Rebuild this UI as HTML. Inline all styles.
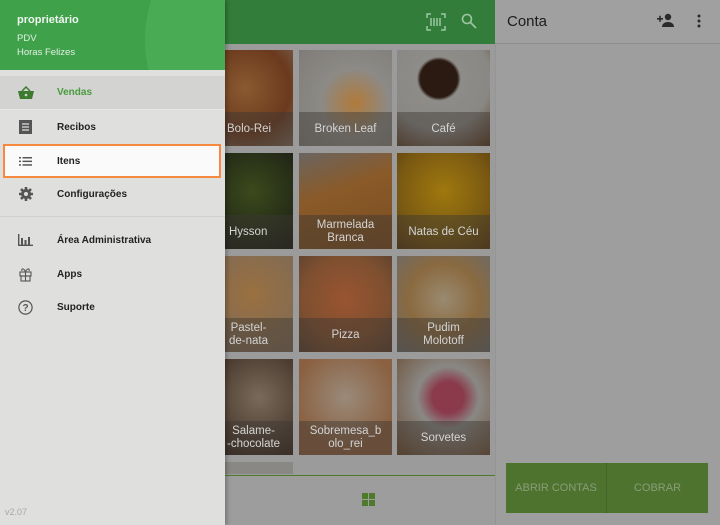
<!DOCTYPE html>
<html><head><meta charset="utf-8"><style>
*{margin:0;padding:0;box-sizing:border-box}
body{width:720px;height:525px;overflow:hidden;position:relative;font-family:"Liberation Sans",sans-serif;background:#9b9b9b}
.abs{position:absolute}
.tile{position:absolute;width:93px;height:96px;overflow:hidden}
.tile .lb{position:absolute;left:0;right:0;bottom:0;height:34px;background:rgba(60,55,50,.45);color:#d4d4d4;font-size:11.5px;text-align:center;display:flex;align-items:center;justify-content:center;line-height:13px}
.mi{position:absolute;left:0;width:225px;height:34px;display:flex;align-items:center;font-size:10px;color:#222;font-weight:bold}
.mi .ic{width:57px;display:flex;justify-content:center;padding-right:6px}
</style></head><body>
<!-- main header -->
<div class="abs" style="left:225px;top:0;width:270px;height:44px;background:#327d3a"></div>
<svg class="abs" style="left:426px;top:13px" width="20" height="18" viewBox="0 0 20 18" fill="none" stroke="#9fc7a3" stroke-width="1.5"><path d="M1 5V1h4M15 1h4v4M19 13v4h-4M5 17H1v-4"/><path d="M5 5v8M8 5v8M11 5v8M14 5v8"/></svg>
<svg class="abs" style="left:461px;top:13px" width="16" height="16" viewBox="0 0 16 16" fill="none" stroke="#9fc7a3" stroke-width="1.6"><circle cx="6" cy="6" r="4.5"/><path d="M9.5 9.5L15 15"/></svg>
<!-- tiles -->
<div class="tile" style="left:225px;top:50px;width:68px;background:radial-gradient(circle at 30% 40%,#8a5a30,#6b3a1e 60%,#7a6a5a)"><div class="lb" style="justify-content:flex-start;padding-left:2px">Bolo-Rei</div></div>
<div class="tile" style="left:299px;top:50px;background:radial-gradient(circle at 60% 55%,#b07a3a,#8c8a86 45%,#7f7c78)"><div class="lb">Broken Leaf</div></div>
<div class="tile" style="left:397px;top:50px;background:radial-gradient(circle at 45% 30%,#2a1a12 22%,#8e8c88 26%,#8a8884 60%,#5a3a22)"><div class="lb">Café</div></div>
<div class="tile" style="left:225px;top:153px;width:68px;background:radial-gradient(circle at 40% 40%,#3a4a1c,#1a1a14)"><div class="lb" style="justify-content:flex-start;padding-left:4px">Hysson</div></div>
<div class="tile" style="left:299px;top:153px;background:linear-gradient(160deg,#6b6560,#8a5a28 40%,#7a4c22)"><div class="lb">Marmelada<br>Branca</div></div>
<div class="tile" style="left:397px;top:153px;background:radial-gradient(circle at 50% 40%,#a0780e,#7a5a12 60%,#5a3a10)"><div class="lb">Natas de Céu</div></div>
<div class="tile" style="left:225px;top:256px;width:68px;background:radial-gradient(circle at 40% 40%,#9a7040,#7a6a5a)"><div class="lb" style="justify-content:flex-start;padding-left:4px">Pastel-<br>de-nata</div></div>
<div class="tile" style="left:299px;top:256px;background:radial-gradient(circle at 50% 45%,#9a5430,#7e5030 60%,#5a4030)"><div class="lb">Pizza</div></div>
<div class="tile" style="left:397px;top:256px;background:radial-gradient(circle at 50% 45%,#9a8a70,#8a6a40 50%,#6a6a6a)"><div class="lb">Pudim<br>Molotoff</div></div>
<div class="tile" style="left:225px;top:359px;width:68px;background:radial-gradient(circle at 50% 40%,#7a6a5a,#3a2a20)"><div class="lb" style="justify-content:flex-start;padding-left:2px">Salame-<br>-chocolate</div></div>
<div class="tile" style="left:299px;top:359px;background:radial-gradient(circle at 50% 40%,#9a8a7a,#8a6040 70%)"><div class="lb">Sobremesa_b<br>olo_rei</div></div>
<div class="tile" style="left:397px;top:359px;background:radial-gradient(circle at 55% 40%,#8a3a4a 20%,#8a8884 40%,#6a4a30)"><div class="lb">Sorvetes</div></div>
<div class="abs" style="left:225px;top:462px;width:68px;height:12px;background:#8a8884"></div>
<!-- bottom bar -->
<div class="abs" style="left:225px;top:475px;width:270px;height:50px;background:#9d9d9d;border-top:1.5px solid #4f7a2c"></div>
<div class="abs" style="left:362px;top:493px;width:13px;height:13px;display:grid;grid-template-columns:6px 6px;gap:1px"><i style="background:#4f7a2c"></i><i style="background:#4f7a2c"></i><i style="background:#4f7a2c"></i><i style="background:#4f7a2c"></i></div>
<!-- right panel -->
<div class="abs" style="left:495px;top:0;width:225px;height:525px;background:#9e9e9e;border-left:1px solid #959595"></div>
<div class="abs" style="left:495px;top:0;width:225px;height:44px;background:#a0a0a0;border-bottom:1px solid #8e8e8e"></div>
<div class="abs" style="left:507px;top:13px;font-size:15px;color:#1c1c1c">Conta</div>
<svg class="abs" style="left:657px;top:13px" width="18" height="14" viewBox="0 0 18 14" fill="#2a2a2a"><circle cx="11" cy="4" r="3.2"/><path d="M5 14c0-3.5 3-5 6-5s6 1.5 6 5z"/><path d="M0 5h6v1.6H0zM2.2 2.8h1.6v6H2.2z"/></svg>
<svg class="abs" style="left:697px;top:14px" width="4" height="14" fill="#2a2a2a"><circle cx="2" cy="2" r="1.5"/><circle cx="2" cy="7" r="1.5"/><circle cx="2" cy="12" r="1.5"/></svg>
<div class="abs" style="left:506px;top:463px;width:202px;height:50px;background:#4d732e;display:flex;color:#8a9d7a;font-size:11px;align-items:center">
<div style="width:101px;text-align:center;border-right:1px dotted #3b5a22;line-height:50px">ABRIR CONTAS</div><div style="width:101px;text-align:center">COBRAR</div></div>
<!-- drawer -->
<div class="abs" style="left:0;top:0;width:225px;height:525px;background:#dfe0dd;box-shadow:2px 0 4px rgba(0,0,0,.25)"></div>
<div class="abs" style="left:0;top:0;width:225px;height:70px;background:#40a14b;overflow:hidden">
<div class="abs" style="left:145px;top:-90px;width:260px;height:260px;border-radius:50%;background:#4aab55"></div>
<div class="abs" style="left:17px;top:14px;font-size:11px;font-weight:bold;color:#eef5ee">proprietário</div>
<div class="abs" style="left:17px;top:33px;font-size:9.5px;color:#e3f0e3">PDV</div>
<div class="abs" style="left:17px;top:47px;font-size:9.5px;color:#e3f0e3">Horas Felizes</div>
</div>
<div class="mi" style="top:76px;background:#d3d4d1;color:#4a9a3e;border-bottom:1px solid #e8e8e6"><div class="ic"><svg width="16" height="14" viewBox="0 0 16 14" fill="#3d7a30"><path d="M0 5h16l-2 8H2z"/><path d="M4 5l4-4 4 4" fill="none" stroke="#3d7a30" stroke-width="1.5"/><circle cx="8" cy="9" r="1.3" fill="#d3d4d1"/></svg></div>Vendas</div>
<div class="mi" style="top:110px"><div class="ic"><svg width="13" height="14" viewBox="0 0 13 14"><rect width="13" height="14" fill="#555"/><path d="M3 4h7M3 7h7M3 10h7" stroke="#dfe0dd" stroke-width="1.3"/></svg></div>Recibos</div>
<div class="abs" style="left:3px;top:144px;width:218px;height:34px;background:#fafafa;border:2.5px solid #f6883f"></div>
<div class="mi" style="top:144px"><div class="ic"><svg width="13" height="9" viewBox="0 0 13 9" fill="#555"><rect y="0" width="2" height="1.5"/><rect x="3.5" y="0" width="9.5" height="1.5"/><rect y="3.6" width="2" height="1.5"/><rect x="3.5" y="3.6" width="9.5" height="1.5"/><rect y="7.2" width="2" height="1.5"/><rect x="3.5" y="7.2" width="9.5" height="1.5"/></svg></div>Itens</div>
<div class="mi" style="top:177px"><div class="ic"><svg width="14" height="14" viewBox="0 0 14 14"><circle cx="7" cy="7" r="5" fill="#555"/><g stroke="#555" stroke-width="2.6"><path d="M7 0v14M0 7h14M2 2l10 10M12 2L2 12"/></g><circle cx="7" cy="7" r="2" fill="#dfe0dd"/></svg></div>Configurações</div>
<div class="abs" style="left:0;top:216px;width:225px;height:1px;background:#cfd0cd"></div>
<div class="mi" style="top:223px"><div class="ic"><svg width="15" height="12" viewBox="0 0 15 12" fill="#555"><rect x="0" y="0" width="1.4" height="12"/><rect x="0" y="10.6" width="15" height="1.4"/><rect x="3" y="4" width="2" height="7"/><rect x="6.5" y="6" width="2" height="5"/><rect x="10" y="3" width="2" height="8"/></svg></div>Área Administrativa</div>
<div class="mi" style="top:257px"><div class="ic"><svg width="13" height="15" viewBox="0 0 13 15" fill="none" stroke="#555" stroke-width="1.1"><rect x="1" y="5" width="11" height="4"/><rect x="2" y="9" width="9" height="5"/><path d="M6.5 5v9M6.5 5C5 1 2 1 3 4M6.5 5C8 1 11 1 10 4"/></svg></div>Apps</div>
<div class="mi" style="top:290px"><div class="ic"><svg width="15" height="15" viewBox="0 0 15 15"><circle cx="7.5" cy="7.5" r="6.6" fill="none" stroke="#555" stroke-width="1.2"/><text x="7.5" y="11" font-size="10" text-anchor="middle" fill="#555" font-family="Liberation Sans">?</text></svg></div>Suporte</div>
<div class="abs" style="left:5px;top:507px;font-size:9px;color:#a8a8a6">v2.07</div>
</body></html>
